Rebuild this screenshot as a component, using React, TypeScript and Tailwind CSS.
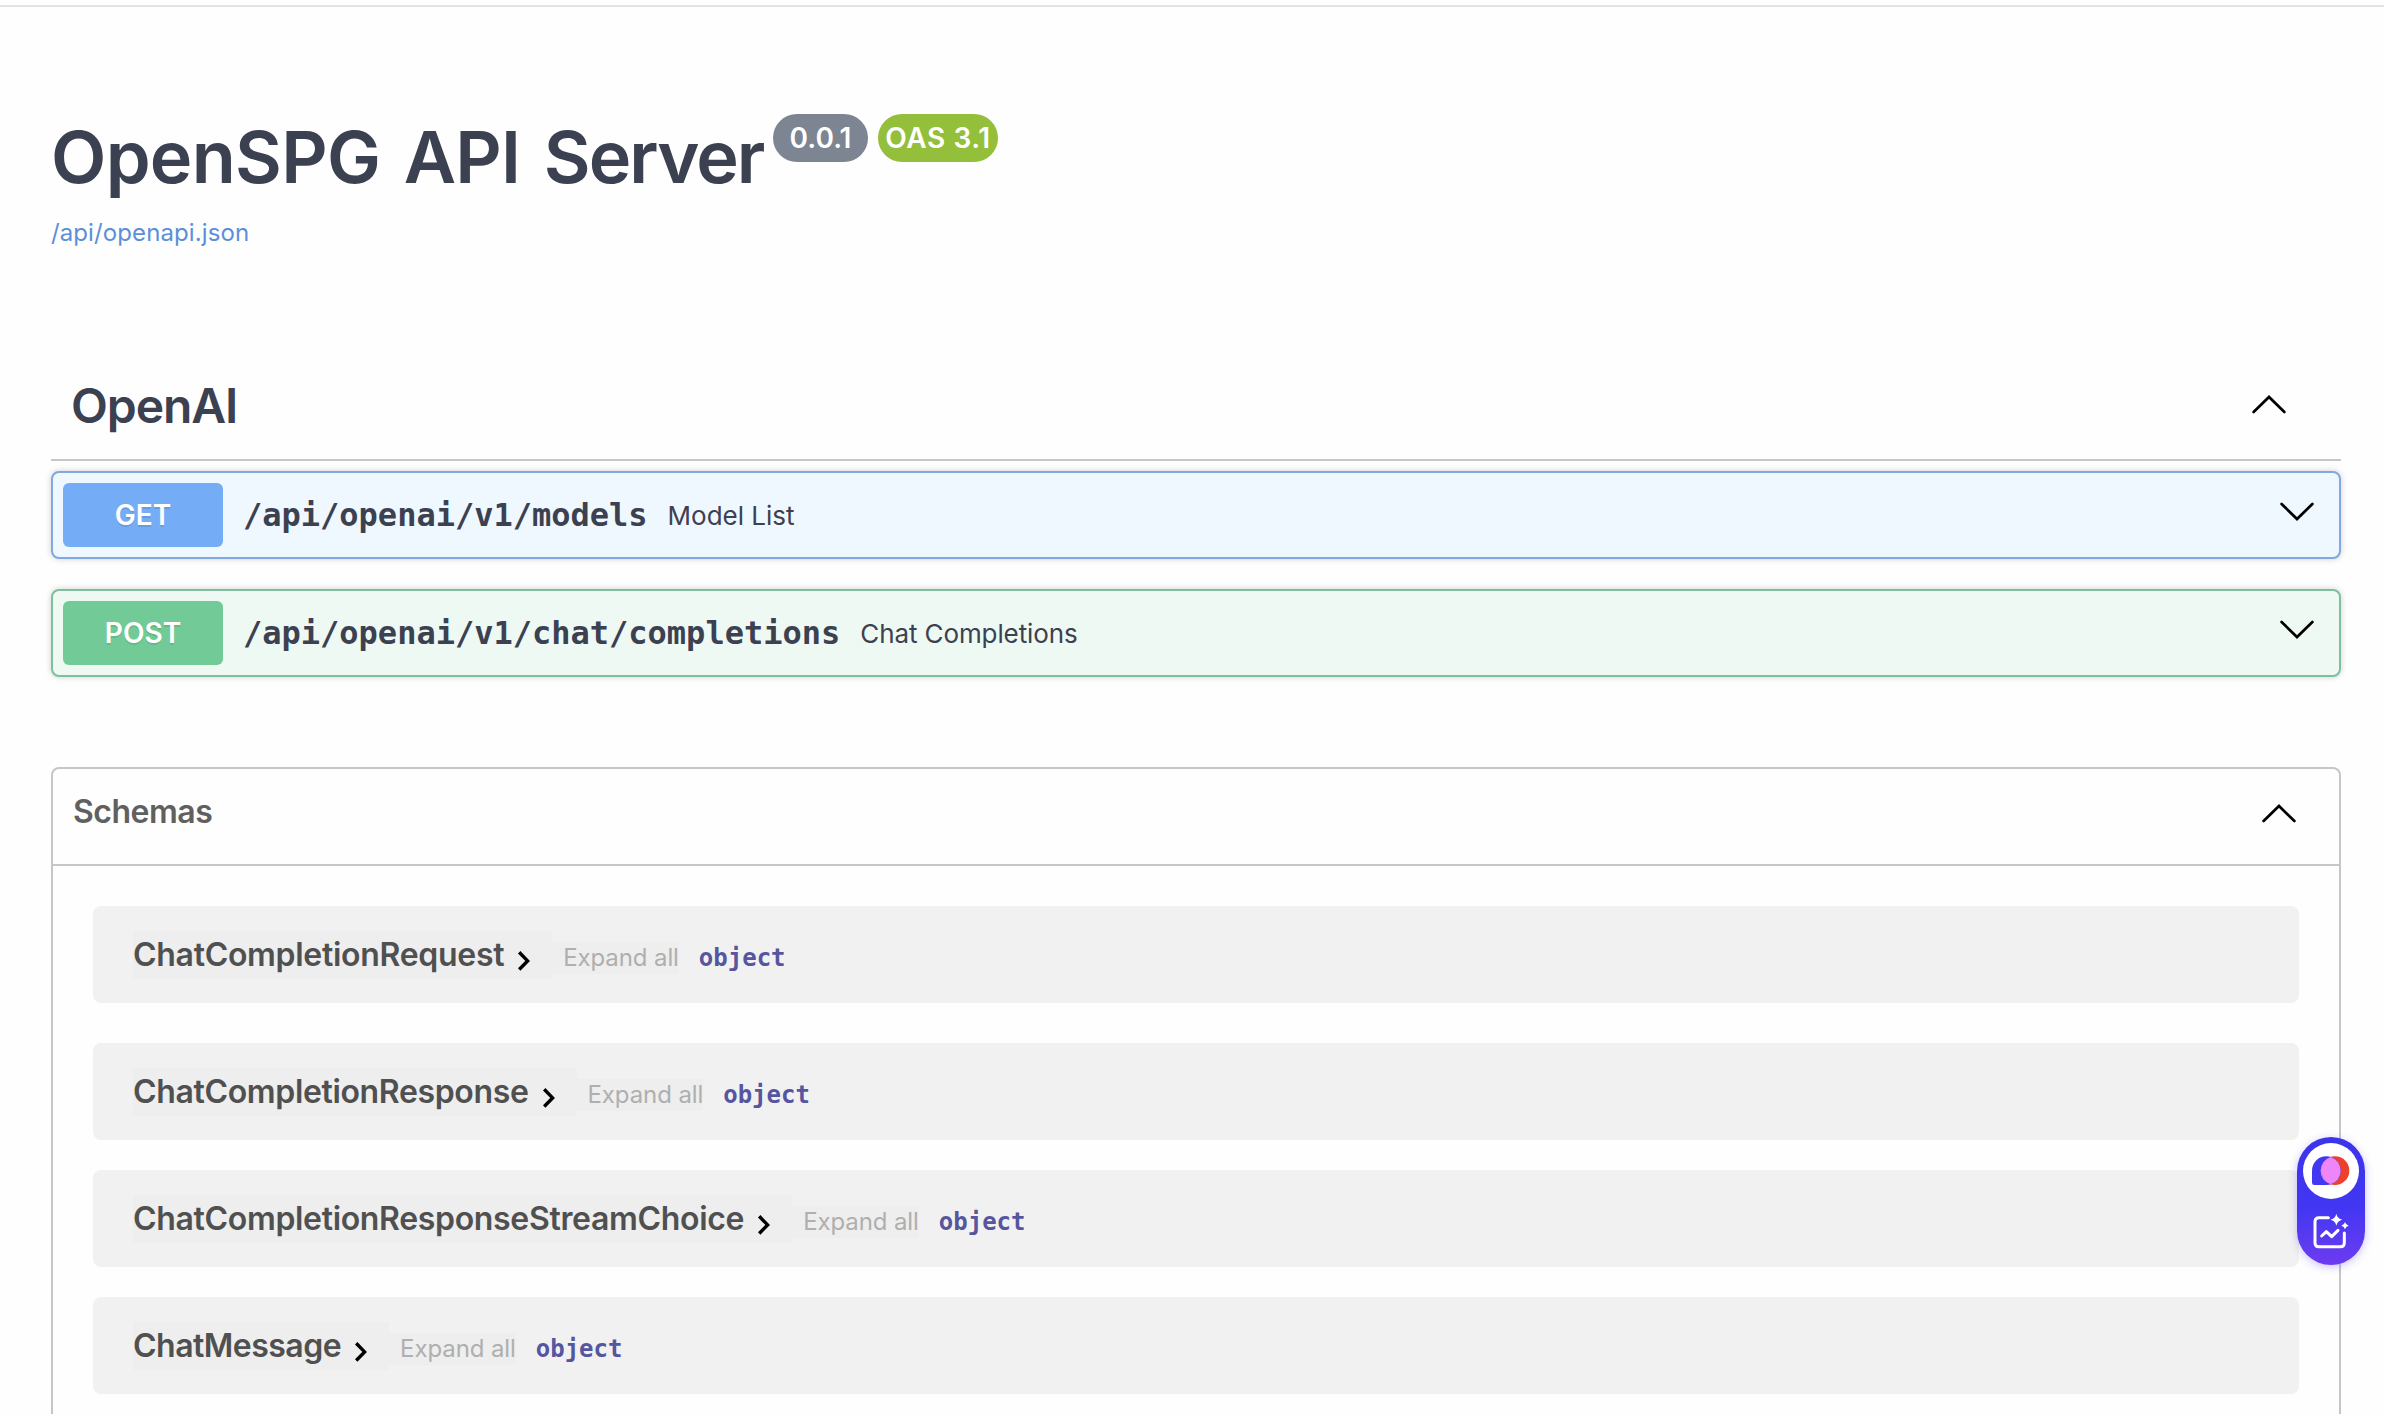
type Schema = { name: string; spacing: string; tracking: string };

const schemas: Schema[] = [
  { name: "ChatCompletionRequest", spacing: "mb-10", tracking: "tracking-[-0.3px]" },
  { name: "ChatCompletionResponse", spacing: "mb-[30px]", tracking: "tracking-[-0.35px]" },
  { name: "ChatCompletionResponseStreamChoice", spacing: "mb-[30px]", tracking: "tracking-[-0.33px]" },
  { name: "ChatMessage", spacing: "mb-10", tracking: "tracking-[-0.52px]" },
];

function LargeArrow({ up = false, className = "" }: { up?: boolean; className?: string }) {
  return (
    <svg
      viewBox="0 0 40 40"
      className={`h-10 w-10 shrink-0 ${className}`}
      fill="none"
      stroke="#000"
      strokeWidth="2.7"
      strokeLinecap="round"
      strokeLinejoin="miter"
    >
      <path d={up ? "M4.6 28 L20 13 L35.4 28" : "M4.6 12 L20 27 L35.4 12"} />
    </svg>
  );
}

type OperationProps = {
  method: string;
  path: string;
  summary: string;
  box: string;
  badge: string;
  summarySpacing: string;
};

function Operation({ method, path, summary, box, badge, summarySpacing }: OperationProps) {
  return (
    <div
      className={`flex h-[88px] items-center rounded-lg border-2 pr-[22px] pl-[10px] shadow-[0_0_6px_rgba(0,0,0,0.19)] ${box}`}
    >
      <span
        className={`flex h-16 w-40 items-center justify-center rounded-md text-[28px] font-semibold text-white [text-shadow:0_2px_0_rgba(0,0,0,0.1)] ${badge}`}
      >
        {method}
      </span>
      <span className="ml-5 font-['DejaVu_Sans_Mono',monospace] text-[32px] leading-10 font-bold">{path}</span>
      <span className={`ml-5 pt-px text-[26px] leading-10 ${summarySpacing}`}>{summary}</span>
      <LargeArrow className="mt-[-7px] ml-auto" />
    </div>
  );
}

function SchemaRow({ name, spacing, tracking }: Schema) {
  return (
    <div className={`flex h-[97px] items-center rounded-lg bg-[#f1f1f1] pl-10 ${spacing}`}>
      <button className="flex h-12 items-center bg-[#eeeeee]">
        <span className={`text-[32px] leading-[48px] font-semibold text-[#505050] ${tracking}`}>{name}</span>
        <svg
          viewBox="0 0 48 48"
          className="h-12 w-12"
          fill="none"
          stroke="#000"
          strokeWidth="3.4"
          strokeLinecap="butt"
        >
          <path d="M15.2 21.3 L23.6 29.9 L15.2 38.5" />
        </svg>
      </button>
      <button className="mt-[6px] h-8 bg-[#eeeeee] pl-[11px] text-2xl leading-8 tracking-[-0.1px] text-[#afafaf]">
        Expand all
      </button>
      <span className="mt-[6px] ml-5 font-['DejaVu_Sans_Mono',monospace] text-2xl leading-8 font-bold text-[#5555a0]">
        object
      </span>
    </div>
  );
}

function AssistantWidget() {
  return (
    <div className="fixed top-[1137px] left-[2297px] flex h-32 w-[68px] flex-col items-center rounded-full bg-linear-to-b from-[#3c34ea] via-[#4236f2] via-55% to-[#6c3bf0] pt-[6px] shadow-[0_2px_8px_rgba(80,60,240,0.3)]">
      <span className="flex h-14 w-14 items-center justify-center rounded-full bg-white">
        <svg viewBox="145 139 114 88" className="h-[29.33px] w-[38px]">
          <circle cx="214" cy="183" r="43" fill="#ec412d" />
          <path d="M188 140 A43 43 0 0 1 188 226 H152 Q145 226 145 219 V183 A43 43 0 0 1 188 140Z" fill="#4338f0" />
          <path d="M201 142 A43 43 0 0 1 201 224 A43 43 0 0 1 201 142Z" fill="#ee85f8" />
        </svg>
      </span>
      <svg viewBox="144 306 114 114" className="mt-[13px] h-[38px] w-[38px]" fill="none" stroke="#fff">
        <g strokeWidth="9" strokeLinecap="round" strokeLinejoin="round">
          <path d="M193 323 H165 Q153 323 153 335 V398 Q153 410 165 410 H229 Q241 410 241 398 V369" />
          <path d="M173 378 L187 365 L203 380 L222 361" />
        </g>
        <g fill="#fff" stroke="none">
          <path d="M217 311 Q220 326 235 329 Q220 332 217 347 Q214 332 199 329 Q214 326 217 311Z" />
          <path d="M243 336 Q245 345 254 347 Q245 349 243 358 Q241 349 232 347 Q241 345 243 336Z" />
        </g>
      </svg>
    </div>
  );
}

export default function App() {
  return (
    <div className="h-[1414px] overflow-hidden bg-[#fefefe] pt-[5px] font-['Inter',sans-serif] text-[#3c4151]">
      <div className="h-[2px] bg-[#e3e3e3]" />
      <main className="mr-[43px] ml-[51px]">
        <header className="pt-[102px]">
          <h1 className="flex items-start">
            <span className="w-[714px] text-[72px] leading-[96px] font-semibold tracking-[-0.7px] whitespace-nowrap [word-spacing:6px]">
              OpenSPG API <span className="tracking-[-1.9px]">Server</span>
            </span>
            <span className="mt-[5px] ml-[8px] flex h-12 w-[95px] items-center justify-center rounded-full bg-[#7d8492] text-[28px] font-semibold text-white">
              0.0.1
            </span>
            <span className="mt-[5px] ml-[10px] flex h-12 w-[120px] items-center justify-center rounded-full bg-[#94bf3a] text-[28px] font-semibold tracking-[0.6px] text-white">
              OAS 3.1
            </span>
          </h1>
          <a className="mt-3 block text-2xl leading-8 tracking-[0.1px] text-[#5c8fd9]">/api/openapi.json</a>
        </header>

        <section className="mt-[100px]">
          <h2 className="flex h-[112px] items-center justify-between border-b-2 border-[#c4c6c8] pr-[52px] pl-5">
            <span className="mt-[3px] text-5xl leading-[60px] font-semibold tracking-[-1.1px]">OpenAI</span>
            <LargeArrow up className="mt-[-1px]" />
          </h2>
          <div className="mt-[10px] flex flex-col gap-[30px]">
            <Operation
              method="GET"
              path="/api/openai/v1/models"
              summary="Model List"
              box="border-[#7fa9e0] bg-[#eff7ff]"
              badge="bg-[#74adf6]"
              summarySpacing=""
            />
            <Operation
              method="POST"
              path="/api/openai/v1/chat/completions"
              summary="Chat Completions"
              box="border-[#7fbf9b] bg-[#eef9f3]"
              badge="bg-[#72ca97]"
              summarySpacing="tracking-[-0.1px]"
            />
          </div>
        </section>

        <section className="mt-[90px] rounded-lg border-2 border-[#c4c6c8]">
          <h4 className="flex h-[97px] items-center justify-between border-b-2 border-[#c4c6c8] pr-10 pl-5">
            <span className="mt-[-9px] text-[32px] leading-10 font-semibold tracking-[-0.5px] text-[#606060]">
              Schemas
            </span>
            <LargeArrow up className="mt-[-7px]" />
          </h4>
          <div className="px-10 pt-10">
            {schemas.map((schema) => (
              <SchemaRow key={schema.name} {...schema} />
            ))}
          </div>
        </section>
      </main>
      <AssistantWidget />
    </div>
  );
}
